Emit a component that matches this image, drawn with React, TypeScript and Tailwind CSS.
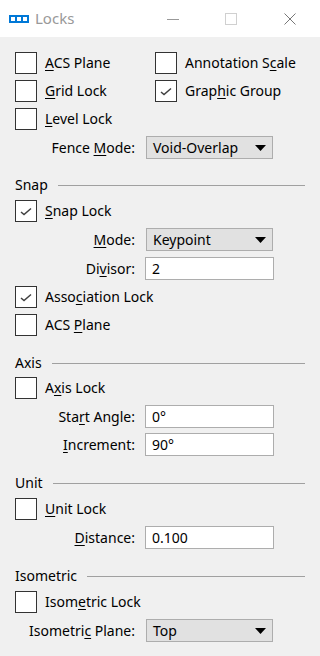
import React from "react";

const font = { fontFamily: '"Noto Sans", "Segoe UI", Arial, sans-serif' };

function Check({ checked }: { checked?: boolean }) {
  return (
    <div className="w-[22px] h-[22px] shrink-0 border border-[#333333] bg-white flex items-center justify-center">
      {checked && (
        <svg width="12" height="9" viewBox="0 0 12 9" className="mt-[1px]">
          <path d="M1 5 L4 7.5 L11 1.5" fill="none" stroke="#404040" strokeWidth="1.5" />
        </svg>
      )}
    </div>
  );
}

function U({ children }: { children: React.ReactNode }) {
  return <span className="underline underline-offset-2 decoration-1">{children}</span>;
}

function CheckRow({
  checked,
  children,
  className = "",
}: {
  checked?: boolean;
  children: React.ReactNode;
  className?: string;
}) {
  return (
    <div className={`flex items-center h-[22px] ${className}`}>
      <Check checked={checked} />
      <span className="ml-[8px] text-[14px] text-black leading-none whitespace-nowrap">{children}</span>
    </div>
  );
}

function Field({
  label,
  children,
  className = "",
}: {
  label: React.ReactNode;
  children: React.ReactNode;
  className?: string;
}) {
  return (
    <div className={`flex items-center ${className}`}>
      <div className="w-[120px] text-right text-[14px] text-black leading-none whitespace-nowrap">{label}</div>
      {children}
    </div>
  );
}

function Select({ value }: { value: string }) {
  return (
    <div className="ml-[11px] w-[127px] h-[23px] border border-[#adadad] bg-[#e1e1e1] flex items-center justify-between pl-[6px] pr-[6px] text-[14px] text-black">
      <span className="leading-none">{value}</span>
      <svg width="11" height="6" viewBox="0 0 11 6">
        <path d="M0 0 H11 L5.5 6 Z" fill="#000" />
      </svg>
    </div>
  );
}

function Input({ value }: { value: string }) {
  return (
    <div className="ml-[10px] w-[129px] h-[23px] border border-[#adadad] bg-white flex items-center pl-[6px] text-[14px] text-black">
      <span className="leading-none">{value}</span>
    </div>
  );
}

function Header({ title, className = "" }: { title: string; className?: string }) {
  return (
    <div className={`flex items-center h-[20px] pr-[15px] ${className}`}>
      <span className="text-[14px] text-black leading-none">{title}</span>
      <div className="flex-1 ml-[10px] h-px bg-[#a0a0a0]" />
    </div>
  );
}

export default function App() {
  return (
    <div className="w-[320px] h-[656px] bg-[#f0f0f0] flex flex-col" style={font}>
      <div className="h-[37px] bg-white flex items-center shrink-0">
        <svg className="ml-[9px]" width="20" height="8" viewBox="0 0 20 8">
          <rect width="20" height="8" fill="#0078d7" />
          <rect x="2" y="2" width="4" height="4" fill="#fff" />
          <rect x="8" y="2" width="4" height="4" fill="#fff" />
          <rect x="14" y="2" width="4" height="4" fill="#fff" />
        </svg>
        <span className="ml-[6px] text-[15px] text-[#999999] leading-none">Locks</span>
        <div className="flex-1" />
        <svg width="12" height="12" viewBox="0 0 12 12" className="mr-[46px]">
          <path d="M0 6.5 H12" stroke="#999" strokeWidth="1" />
        </svg>
        <svg width="12" height="12" viewBox="0 0 12 12" className="mr-[47px]">
          <rect x="0.5" y="0.5" width="11" height="11" fill="none" stroke="#d0d0d0" />
        </svg>
        <svg width="12" height="12" viewBox="0 0 12 12" className="mr-[24px]">
          <path d="M0.5 0.5 L11.5 11.5 M11.5 0.5 L0.5 11.5" stroke="#777" strokeWidth="1" />
        </svg>
      </div>

      <div className="flex flex-col pl-[15px]">
        <div className="flex mt-[15px]">
          <CheckRow className="w-[140px]">
            <U>A</U>CS Plane
          </CheckRow>
          <CheckRow>
            Annotation S<U>c</U>ale
          </CheckRow>
        </div>
        <div className="flex mt-[6px]">
          <CheckRow className="w-[140px]">
            <U>G</U>rid Lock
          </CheckRow>
          <CheckRow checked>
            Grap<U>h</U>ic Group
          </CheckRow>
        </div>
        <CheckRow className="mt-[6px]">
          <U>L</U>evel Lock
        </CheckRow>
        <Field
          className="mt-[6px]"
          label={
            <>
              Fence <U>M</U>ode:
            </>
          }
        >
          <Select value="Void-Overlap" />
        </Field>

        <Header title="Snap" className="mt-[16px]" />
        <CheckRow checked className="mt-[5px]">
          <U>S</U>nap Lock
        </CheckRow>
        <Field
          className="mt-[6px]"
          label={
            <>
              <U>M</U>ode:
            </>
          }
        >
          <Select value="Keypoint" />
        </Field>
        <Field
          className="mt-[6px]"
          label={
            <>
              Di<U>v</U>isor:
            </>
          }
        >
          <Input value="2" />
        </Field>
        <CheckRow checked className="mt-[6px]">
          Asso<U>c</U>iation Lock
        </CheckRow>
        <CheckRow className="mt-[6px]">
          ACS <U>P</U>lane
        </CheckRow>

        <Header title="Axis" className="mt-[17px]" />
        <CheckRow className="mt-[4px]">
          A<U>x</U>is Lock
        </CheckRow>
        <Field
          className="mt-[6px]"
          label={
            <>
              Sta<U>r</U>t Angle:
            </>
          }
        >
          <Input value="0°" />
        </Field>
        <Field
          className="mt-[5px]"
          label={
            <>
              <U>I</U>ncrement:
            </>
          }
        >
          <Input value="90°" />
        </Field>

        <Header title="Unit" className="mt-[17px]" />
        <CheckRow className="mt-[5px]">
          <U>U</U>nit Lock
        </CheckRow>
        <Field
          className="mt-[6px]"
          label={
            <>
              <U>D</U>istance:
            </>
          }
        >
          <Input value="0.100" />
        </Field>

        <Header title="Isometric" className="mt-[17px]" />
        <CheckRow className="mt-[5px]">
          Isom<U>e</U>tric Lock
        </CheckRow>
        <Field
          className="mt-[6px]"
          label={
            <>
              Isometri<U>c</U> Plane:
            </>
          }
        >
          <Select value="Top" />
        </Field>
      </div>
    </div>
  );
}
